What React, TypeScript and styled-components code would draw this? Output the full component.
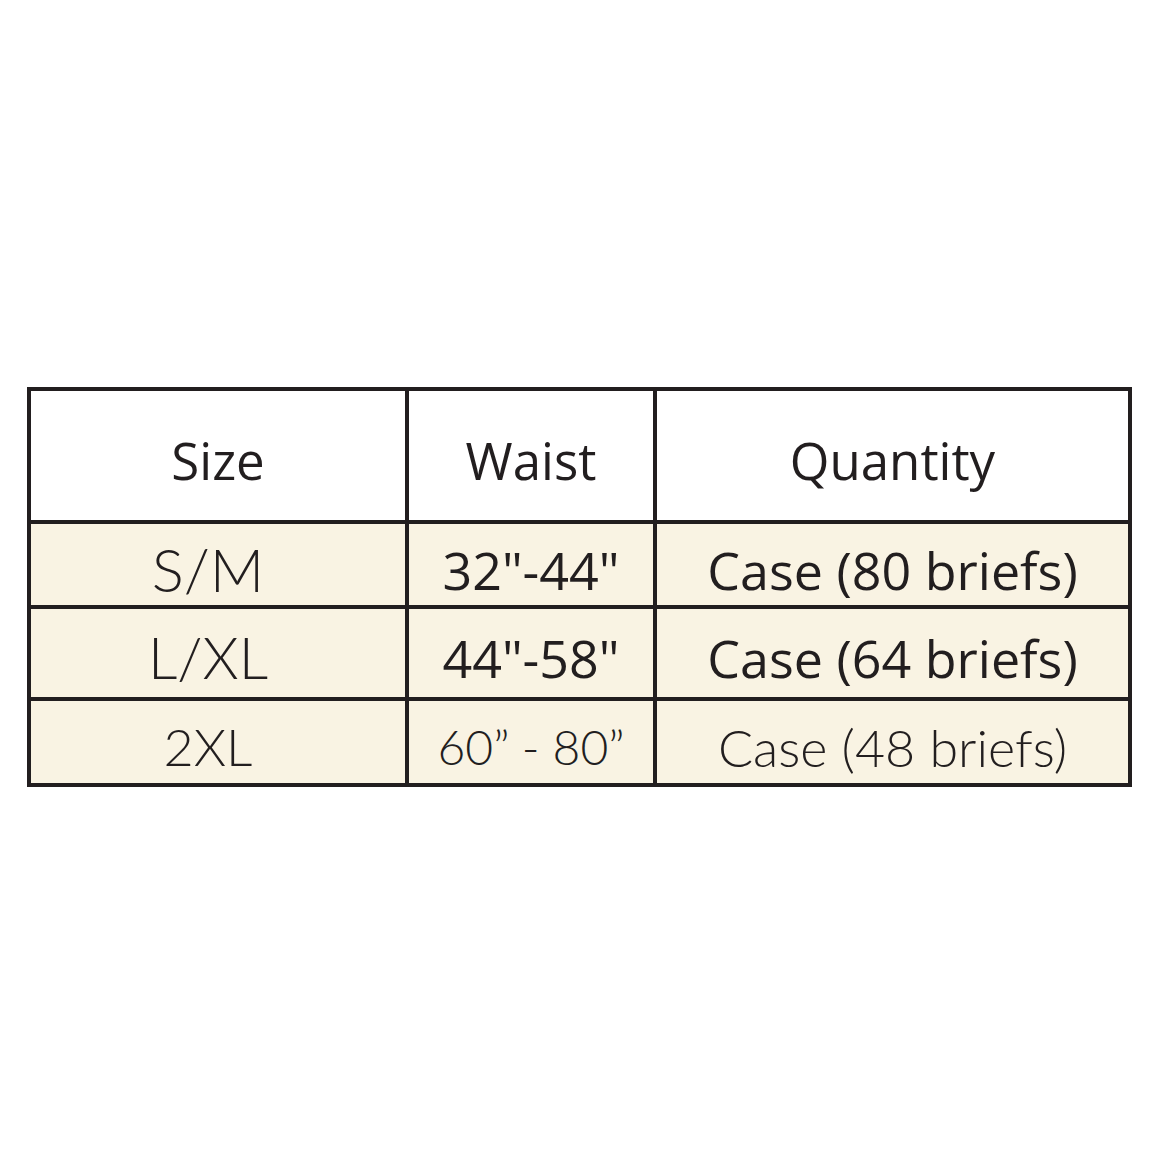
import React from 'react';
import styled, {createGlobalStyle} from 'styled-components';

const ink = '#221e1f';
const cream = '#f9f3e3';

const GlobalStyle = createGlobalStyle`
    html, body {
        margin: 0;
        background: #ffffff;
    }
`;

const Page = styled.div`
    width: 1168px;
    height: 1168px;
    box-sizing: border-box;
    padding: 387px 0 0 27px;
    background: #ffffff;
`;

const Grid = styled.div`
    display: grid;
    width: max-content;
    grid-template-columns: 374px 244px 471px;
    grid-template-rows: 129px 81px 88px 82px;
    gap: 4px;
    padding: 4px;
    background: ${ink};
`;

type CellProps = {
    $head?: boolean;
    $face?: 'humanist' | 'geometric';
    $size?: number;
    $shiftX?: number;
    $shiftY?: number;
};

const Cell = styled.div<CellProps>`
    display: flex;
    align-items: center;
    justify-content: center;
    background: ${p => (p.$head ? '#ffffff' : cream)};
    color: ${ink};
    font-family: ${p => (p.$face === 'geometric' ? '"Lato", "Open Sans", sans-serif' : '"Open Sans", "Noto Sans", sans-serif')};
    font-weight: ${p => (p.$face === 'geometric' ? 300 : 400)};
    font-size: ${p => p.$size ?? 52}px;
    line-height: 1;
    white-space: nowrap;
    padding-right: ${p => (p.$shiftX ? p.$shiftX : 0)}px;
    padding-top: ${p => (p.$shiftY ? p.$shiftY : 0)}px;
`;

const rows = [
    {size: 'S/M', waist: '32"-44"', qty: 'Case (80 briefs)', sizePx: 60, legacy: false},
    {size: 'L/XL', waist: '44"-58"', qty: 'Case (64 briefs)', sizePx: 58, legacy: false},
    {size: '2XL', waist: '60\u201d - 80\u201d', qty: 'Case (48 briefs)', sizePx: 52, legacy: true},
];

export default function App() {
    return (
        <>
            <GlobalStyle/>
            <Page>
                <Grid role="table">
                    <Cell $head role="columnheader" $size={51} $shiftY={10}>Size</Cell>
                    <Cell $head role="columnheader" $size={51} $shiftY={10}>Waist</Cell>
                    <Cell $head role="columnheader" $size={51} $shiftY={10}>Quantity</Cell>
                    {rows.map(r => (
                        <React.Fragment key={r.size}>
                            <Cell role="cell" $face="geometric" $size={r.sizePx} $shiftX={20} $shiftY={8}>{r.size}</Cell>
                            <Cell role="cell" $face={r.legacy ? 'geometric' : 'humanist'} $size={r.legacy ? 48 : 52} $shiftY={10}>{r.waist}</Cell>
                            <Cell role="cell" $face={r.legacy ? 'geometric' : 'humanist'} $size={52} $shiftY={10}>{r.qty}</Cell>
                        </React.Fragment>
                    ))}
                </Grid>
            </Page>
        </>
    );
}
